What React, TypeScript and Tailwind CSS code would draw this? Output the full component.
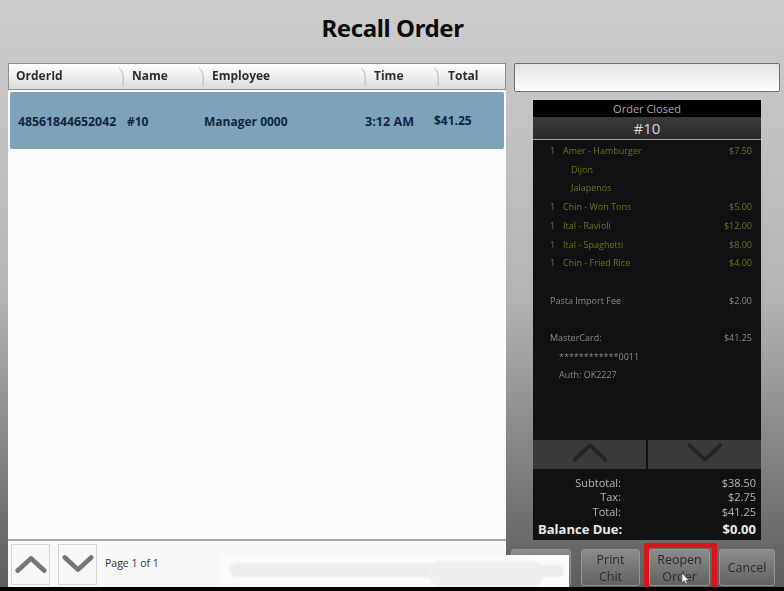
import React from "react";

function Chevron({ up, className, w = 3 }: { up?: boolean; className?: string; w?: number }) {
  return (
    <svg viewBox="0 0 34 20" className={className} fill="none" stroke="currentColor" strokeWidth={w} strokeLinecap="round" strokeLinejoin="round">
      <path d={up ? "M3 17 L17 4 L31 17" : "M3 3 L17 16 L31 3"} />
    </svg>
  );
}

function HeaderCell({ label, width, pad, sep = true }: { label: string; width: string; pad: string; sep?: boolean }) {
  return (
    <div className={`relative flex h-full items-center pb-[2px] ${width} ${pad}`}>
      <span className="text-[12px] font-bold text-[#2a2f36] blur-[0.2px]">{label}</span>
      {sep && (
        <svg viewBox="0 0 6 20" className="absolute right-0 top-[3px] h-[20px] w-[6px] text-[#b9b9b9]" fill="none" stroke="currentColor">
          <path d="M0 1 C3 3 5 6 4 19" />
        </svg>
      )}
    </div>
  );
}

function Item({ q, name, price, tone = "text-[#66791f]", noQty }: { q?: string; name: string; price?: string; tone?: string; noQty?: boolean }) {
  return (
    <div className={`flex h-[18.7px] items-center justify-between pl-[17px] pr-[9px] text-[9px] blur-[0.5px] ${tone}`}>
      <div className="flex items-center">
        {!noQty && <span className="w-[13px]">{q}</span>}
        <span>{name}</span>
      </div>
      <span>{price}</span>
    </div>
  );
}

function Sub({ children, tone, pad }: { children: React.ReactNode; tone: string; pad: string }) {
  return <div className={`flex h-[18.7px] items-center text-[9px] blur-[0.5px] ${pad} ${tone}`}>{children}</div>;
}

function Total({ label, value }: { label: string; value: string }) {
  return (
    <div className="flex h-[14.5px] items-center text-[11px] blur-[0.2px]">
      <span className="w-[83px] text-right">{label}</span>
      <span className="flex-1 text-right">{value}</span>
    </div>
  );
}

function ActionBtn({ children, w }: { children: React.ReactNode; w: string }) {
  return (
    <div className={`flex h-[37px] ${w} items-center justify-center rounded-[3px] border border-[#969696] bg-gradient-to-b from-[#8c8c8c] to-[#626262] text-center text-[12.5px] leading-[17px] text-[#2b2b2b]`}>
      <div className="blur-[0.3px]">{children}</div>
    </div>
  );
}

export default function App() {
  return (
    <div
      className="relative flex h-[591px] w-[784px] flex-col overflow-hidden bg-gradient-to-b from-[#cdcdcd] via-[#b4b4b4] to-[#5c5c5c] pb-[4px]"
      style={{ fontFamily: '"Open Sans", "Noto Sans", sans-serif' }}
    >
      <h1 className="flex h-[63px] shrink-0 items-center justify-center pb-[7px] pl-[1px] text-[24px] font-bold tracking-[-0.4px] text-[#0c0c0c]" style={{ fontFamily: '"Noto Sans", sans-serif' }}>
        Recall Order
      </h1>

      <div className="flex min-h-0 flex-1">
        {/* left */}
        <div className="ml-[8px] flex w-[498px] flex-col bg-white">
          <div className="flex h-[27px] shrink-0 items-center border border-[#8f8f8f] bg-gradient-to-b from-white to-[#dcdcdc]">
            <HeaderCell label="OrderId" width="w-[116px]" pad="pl-[7px]" />
            <HeaderCell label="Name" width="w-[80px]" pad="pl-[7px]" />
            <HeaderCell label="Employee" width="w-[162px]" pad="pl-[7px]" />
            <HeaderCell label="Time" width="w-[73px]" pad="pl-[7px]" />
            <HeaderCell label="Total" width="w-[60px]" pad="pl-[8px]" sep={false} />
          </div>
          <div className="flex min-h-0 flex-1 flex-col bg-[#fbfbfb] px-[2px] pt-[2px]">
            <div className="flex h-[57px] items-center rounded-[2px] bg-[#7ea3b8] pt-[3px] text-[12px] font-bold text-[#0f2740]">
              <span className="w-[117px] pl-[8px] text-[12.3px] tracking-[-0.02px]">48561844652042</span>
              <span className="w-[77px]">#10</span>
              <span className="w-[161px]">Manager 0000</span>
              <span className="w-[69px] text-[12.6px]">3:12 AM</span>
              <span className="mb-[3px]">$41.25</span>
            </div>
          </div>
          <div className="h-[2px] shrink-0 bg-[#a5a5a5]" />
          <div className="flex h-[46px] shrink-0 items-center bg-[#f8f8f8] pl-[3px]">
            <div className="flex h-[41px] w-[39px] items-center justify-center border border-[#d6d6d6] text-[#767676]">
              <Chevron up className="h-[20px] w-[32px]" w={5} />
            </div>
            <div className="ml-[8px] flex h-[41px] w-[39px] items-center justify-center border border-[#d6d6d6] text-[#767676]">
              <Chevron className="h-[20px] w-[32px]" w={5} />
            </div>
            <span className="ml-[8px] text-[10.5px] text-[#333]">Page 1 of 1</span>
          </div>
        </div>

        {/* right */}
        <div className="ml-[8px] flex w-[266px] flex-col">
          <div className="h-[29px] shrink-0 rounded-[2px] border border-[#6f6f6f] bg-gradient-to-b from-[#e2e2e2] to-white" />
          <div className="ml-[19px] mt-[8px] flex h-[440px] w-[228px] shrink-0 flex-col bg-[#111113]">
            <div className="flex h-[17px] shrink-0 items-center justify-center bg-black pt-[2px] text-[11px] text-[#a8a8a8]">Order Closed</div>
            <div className="flex h-[23px] shrink-0 items-center justify-center border-b border-[#a5a58f] bg-gradient-to-b from-[#3a3a3a] to-[#2a2a2a] text-[15px] text-[#d8d8d8]">#10</div>
            <div className="flex min-h-0 flex-1 flex-col pt-[1.5px]">
              <Item q="1" name="Amer - Hamburger" price="$7.50" />
              <Sub tone="text-[#66791f]" pad="pl-[38px]">Dijon</Sub>
              <Sub tone="text-[#66791f]" pad="pl-[38px]">Jalapenos</Sub>
              <Item q="1" name="Chin - Won Tons" price="$5.00" />
              <Item q="1" name="Ital - Ravioli" price="$12.00" />
              <Item q="1" name="Ital - Spaghetti" price="$8.00" />
              <Item q="1" name="Chin - Fried Rice" price="$4.00" />
              <div className="h-[18.7px]" />
              <Item noQty name="Pasta Import Fee" price="$2.00" tone="text-[#8a8a8a]" />
              <div className="h-[18.7px]" />
              <Item noQty name="MasterCard:" price="$41.25" tone="text-[#8a8a8a]" />
              <Sub tone="text-[#8a8a8a]" pad="pl-[26px]">************0011</Sub>
              <Sub tone="text-[#8a8a8a]" pad="pl-[26px]">Auth: OK2227</Sub>
            </div>
            <div className="flex h-[29px] shrink-0 gap-[2px] bg-[#111113]">
              <div className="flex flex-1 items-center justify-center bg-[#3a3a3a] pb-[4px] text-[#242424]">
                <Chevron up className="h-[22px] w-[38px]" w={3.5} />
              </div>
              <div className="flex flex-1 items-center justify-center bg-[#3a3a3a] pb-[3px] text-[#242424]">
                <Chevron className="h-[22px] w-[38px]" w={3.5} />
              </div>
            </div>
            <div className="flex shrink-0 flex-col px-[5px] pt-[7px] text-[#b5b5b5]">
              <Total label="Subtotal:" value="$38.50" />
              <Total label="Tax:" value="$2.75" />
              <Total label="Total:" value="$41.25" />
              <div className="flex h-[21px] items-center justify-between pt-[1px] text-[13px] font-bold text-[#e8e8e8]"><span>Balance Due:</span><span>$0.00</span></div>
            </div>
          </div>
        </div>
      </div>

      {/* action buttons */}
      <div className="absolute left-[511px] top-[549px] flex gap-[9px]">
        <ActionBtn w="w-[60px] mr-[1px]">{""}</ActionBtn>
        <ActionBtn w="w-[59px]">
          <span>Print<br />Chit</span>
        </ActionBtn>
        <ActionBtn w="w-[61px]">
          <span>Reopen<br />Order</span>
        </ActionBtn>
        <ActionBtn w="w-[56px]">Cancel</ActionBtn>
      </div>

      {/* redaction */}
      <div className="absolute left-[220px] top-[555px] h-[32px] w-[349px] bg-[#fbfbfb]">
        <div className="absolute left-[10px] top-[8px] h-[14px] w-[205px] rounded-full bg-[#ececec] blur-[1px]" />
        <div className="absolute left-[210px] top-[6px] h-[26px] w-[112px] rounded-[10px] bg-[#efefef] blur-[1px]" />
        <div className="absolute right-[5px] top-[10px] h-[12px] w-[30px] rounded-full bg-[#ececec] blur-[1px]" />
      </div>

      {/* red highlight */}
      <div className="absolute left-[644px] top-[543px] h-[48px] w-[73px] border-[5px] border-b-0 border-[#d8141c]" />

      {/* cursor */}
      <svg viewBox="0 0 10 14" className="absolute left-[681px] top-[572px] h-[13px] w-[9px]">
        <path d="M1 1 L1 12 L3.6 9.6 L5.4 13 L7 12.2 L5.4 9 L9 9 Z" fill="#f2f2f2" stroke="#333" strokeWidth="0.6" />
      </svg>

      <div className="absolute bottom-0 left-0 h-[4px] w-full bg-black" />
    </div>
  );
}
